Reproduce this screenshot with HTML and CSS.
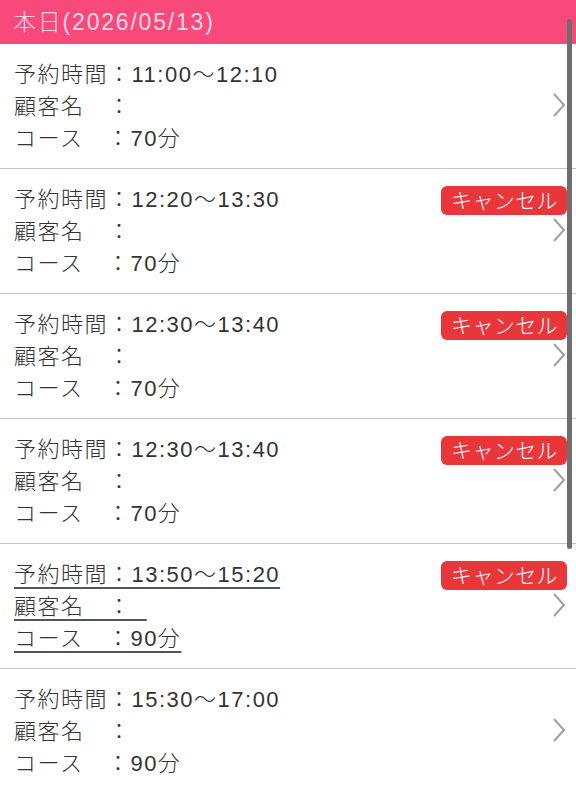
FILE: index.html
```html
<!DOCTYPE html>
<html lang="ja">
<head>
<meta charset="utf-8">
<link rel="stylesheet" href="styles.css">
</head>
<body>
<div class="header">本日(2026/05/13)</div>
<div class="list">
  <div class="row">
    <div class="info">
      <div class="line">予約時間：11:00〜12:10</div>
      <div class="line">顧客名　：</div>
      <div class="line">コース　：70分</div>
    </div>
    <div class="side">
      <div class="slot"></div>
      <svg class="chev" viewBox="0 0 14 26" width="14" height="26"><path d="M2 2 L12 13 L2 24" /></svg>
    </div>
  </div>
  <div class="row">
    <div class="info">
      <div class="line">予約時間：12:20〜13:30</div>
      <div class="line">顧客名　：</div>
      <div class="line">コース　：70分</div>
    </div>
    <div class="side">
      <div class="slot"><span class="badge">キャンセル</span></div>
      <svg class="chev" viewBox="0 0 14 26" width="14" height="26"><path d="M2 2 L12 13 L2 24" /></svg>
    </div>
  </div>
  <div class="row">
    <div class="info">
      <div class="line">予約時間：12:30〜13:40</div>
      <div class="line">顧客名　：</div>
      <div class="line">コース　：70分</div>
    </div>
    <div class="side">
      <div class="slot"><span class="badge">キャンセル</span></div>
      <svg class="chev" viewBox="0 0 14 26" width="14" height="26"><path d="M2 2 L12 13 L2 24" /></svg>
    </div>
  </div>
  <div class="row">
    <div class="info">
      <div class="line">予約時間：12:30〜13:40</div>
      <div class="line">顧客名　：</div>
      <div class="line">コース　：70分</div>
    </div>
    <div class="side">
      <div class="slot"><span class="badge">キャンセル</span></div>
      <svg class="chev" viewBox="0 0 14 26" width="14" height="26"><path d="M2 2 L12 13 L2 24" /></svg>
    </div>
  </div>
  <div class="row">
    <div class="info">
      <div class="line"><span class="ul">予約時間：13:50〜15:20</span></div>
      <div class="line"><span class="ul">顧客名　：&nbsp;&nbsp;</span></div>
      <div class="line"><span class="ul">コース　：90分</span></div>
    </div>
    <div class="side">
      <div class="slot"><span class="badge">キャンセル</span></div>
      <svg class="chev" viewBox="0 0 14 26" width="14" height="26"><path d="M2 2 L12 13 L2 24" /></svg>
    </div>
  </div>
  <div class="row">
    <div class="info">
      <div class="line">予約時間：15:30〜17:00</div>
      <div class="line">顧客名　：</div>
      <div class="line">コース　：90分</div>
    </div>
    <div class="side">
      <div class="slot"></div>
      <svg class="chev" viewBox="0 0 14 26" width="14" height="26"><path d="M2 2 L12 13 L2 24" /></svg>
    </div>
  </div>
</div>
<div class="scrollbar"></div>
</body>
</html>
```
FILE: styles.css
```css
html, body {
  margin: 0;
  padding: 0;
  background: #fff;
  overflow: hidden;
}
body {
  font-family: "Liberation Sans", "Noto Sans CJK JP", sans-serif;
  font-weight: 300;
  color: #333;
  width: 576px;
  height: 791px;
  position: relative;
}
.header {
  height: 44px;
  background: #f9497a;
  color: #fcd9e4;
  font-size: 23px;
  letter-spacing: 1.8px;
  line-height: 44px;
  padding-left: 13px;
  box-sizing: border-box;
}
.list {
  display: flex;
  flex-direction: column;
}
.row {
  display: grid;
  grid-template-columns: 1fr auto;
  height: 125px;
  box-sizing: border-box;
  border-bottom: 1.5px solid #c4c4c4;
  padding: 15px 9px 0 14px;
}
.line {
  font-size: 22px;
  line-height: 32px;
  letter-spacing: 1.5px;
  white-space: nowrap;
}
.ul {
  text-decoration: underline;
  text-decoration-color: #555;
  text-decoration-thickness: 2px;
  text-underline-offset: 5px;
}
.side {
  display: flex;
  flex-direction: column;
  align-items: flex-end;
}
.slot {
  height: 29px;
  margin-top: 2px;
}
.badge {
  display: inline-block;
  height: 29px;
  line-height: 29px;
  background: #e8363b;
  color: #fff;
  font-size: 21px;
  padding: 0 9px 0 10px;
  border-radius: 6px;
  letter-spacing: 0.4px;
}
.chev {
  margin-top: 2px;
  margin-right: 1px;
}
.chev path {
  fill: none;
  stroke: #a0a0a0;
  stroke-width: 2;
}
.scrollbar {
  position: absolute;
  left: 567px;
  top: 19px;
  width: 5px;
  height: 530px;
  background: #6e6e6e;
  border-radius: 3px;
}
```
